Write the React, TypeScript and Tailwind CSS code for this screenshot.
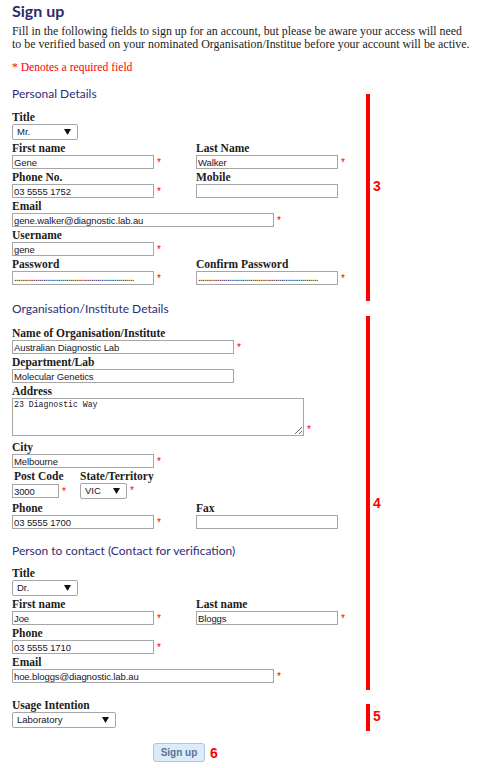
const serif = "font-['Liberation_Serif',serif]"
const sans = "font-['Liberation_Sans',Arial,sans-serif]"

function Req({ bottom }: { bottom?: boolean }) {
  return (
    <span
      className={`ml-[3px] text-[10px] leading-[10px] text-[#ff0000] ${sans} ${bottom ? 'self-end mb-[1px]' : 'self-start mt-[3px]'}`}
    >
      *
    </span>
  )
}

function Label({ children, className = '' }: { children: React.ReactNode; className?: string }) {
  return (
    <div className={`h-[14px] leading-[14px] text-[11.5px] font-bold text-[#1c1c1c] ${serif} ${className}`}>
      {children}
    </div>
  )
}

function TextBox({ value = '', width, req, dots }: { value?: string; width: string; req?: boolean; dots?: boolean }) {
  return (
    <div className="flex h-[14px]">
      <input
        readOnly
        value={dots ? '.'.repeat(62) : value}
        className={`h-[14px] border border-[#a6a6a6] bg-white px-[1px] leading-[12px] text-[#15152a] outline-none ${sans} ${dots ? 'text-[10px] tracking-[-0.85px] pb-[2px]' : 'text-[9.5px] tracking-[-0.1px]'} ${width}`}
      />
      {req && <Req />}
    </div>
  )
}

function Select({ value, width, req }: { value: string; width: string; req?: boolean }) {
  return (
    <div className="flex h-[16px]">
      <div
        className={`flex h-[16px] items-center justify-between rounded-[2px] border border-[#a6a6a6] bg-white pl-[4px] pr-[6px] text-[9.5px] text-[#15152a] ${sans} ${width}`}
      >
        <span>{value}</span>
        <svg width="7" height="6" viewBox="0 0 7 6">
          <path d="M0 0h7L3.5 6z" fill="#111" />
        </svg>
      </div>
      {req && <Req />}
    </div>
  )
}

function Field({ label, value, width = 'w-[142px]', req, dots }: { label: string; value?: string; width?: string; req?: boolean; dots?: boolean }) {
  return (
    <div className="mb-[1px]">
      <Label>{label}</Label>
      <TextBox value={value} width={width} req={req} dots={dots} />
    </div>
  )
}

function Pair({ left, right }: { left: React.ReactNode; right?: React.ReactNode }) {
  return (
    <div className="flex">
      <div className="w-[184px]">{left}</div>
      <div>{right}</div>
    </div>
  )
}

function Heading({ children, className = '' }: { children: React.ReactNode; className?: string }) {
  return (
    <div className={`h-[14px] leading-[14px] text-[12px] text-[#2d2d78] font-['Lato',sans-serif] ${className}`}>
      {children}
    </div>
  )
}

function Marker({ top, height, num, numTop }: { top: string; height: string; num: string; numTop: string }) {
  return (
    <>
      <div className={`absolute left-[366px] w-[4px] bg-[#ff0000] ${top} ${height}`} />
      <div className={`absolute left-[373px] text-[14px] font-bold leading-[16px] text-[#ff0000] ${sans} ${numTop}`}>{num}</div>
    </>
  )
}

export default function App() {
  return (
    <div className="relative min-h-[768px] w-[487px] bg-white pl-[12px]">
      <h1 className="h-[22px] text-[16px] font-bold leading-[22px] text-[#2b2b6b] font-['Lato',sans-serif]">Sign up</h1>
      <p className={`mt-[3px] text-[11.9px] leading-[13px] text-[#1c1c1c] ${serif}`}>
        Fill in the following fields to sign up for an account, but please be aware your access will need
        <br />
        to be verified based on your nominated Organisation/Institue before your account will be active.
      </p>
      <p className={`mt-[10px] text-[11.6px] leading-[13px] text-[#ff0000] ${serif}`}>* Denotes a required field</p>

      {/* Personal details */}
      <Heading className="mt-[13px]">Personal Details</Heading>
      <Label className="mt-[9px]">Title</Label>
      <Select value="Mr." width="w-[66px]" />
      <div className="mt-[1px]">
        <Pair left={<Field label="First name" value="Gene" req />} right={<Field label="Last Name" value="Walker" req />} />
        <Pair left={<Field label="Phone No." value="03 5555 1752" req />} right={<Field label="Mobile" />} />
        <Field label="Email" value="gene.walker@diagnostic.lab.au" width="w-[262px]" req />
        <Field label="Username" value="gene" req />
        <Pair left={<Field label="Password" dots req />} right={<Field label="Confirm Password" dots req />} />
      </div>

      {/* Organisation */}
      <Heading className="mt-[16px]">Organisation/Institute Details</Heading>
      <div className="mt-[10px]">
        <Field label="Name of Organisation/Institute" value="Australian Diagnostic Lab" width="w-[222px]" req />
        <Field label="Department/Lab" value="Molecular Genetics" width="w-[222px]" />
        <Label>Address</Label>
        <div className="flex">
          <textarea
            readOnly
            value="23 Diagnostic Way"
            className="block h-[38px] w-[292px] border border-[#a6a6a6] bg-white px-[1px] py-[1px] text-[8.2px] leading-[10px] text-[#15152a] outline-none font-['Liberation_Mono',monospace]"
          />
          <Req bottom />
        </div>
        <div className="mt-[4px]">
          <Field label="City" value="Melbourne" req />
        </div>
        <div className="flex">
          <div className="w-[68px]">
            <Label className="pl-[2px]">Post Code</Label>
            <div className="mt-[1px]">
              <TextBox value="3000" width="w-[47px]" req />
            </div>
          </div>
          <div>
            <Label>State/Territory</Label>
            <Select value="VIC" width="w-[47px]" req />
          </div>
        </div>
        <div className="mt-[2px]">
          <Pair left={<Field label="Phone" value="03 5555 1700" req />} right={<Field label="Fax" />} />
        </div>
      </div>

      {/* Contact */}
      <Heading className="mt-[14px]">Person to contact (Contact for verification)</Heading>
      <Label className="mt-[8px]">Title</Label>
      <Select value="Dr." width="w-[66px]" />
      <div className="mt-[1px]">
        <Pair left={<Field label="First name" value="Joe" req />} right={<Field label="Last name" value="Bloggs" req />} />
        <Field label="Phone" value="03 5555 1710" req />
        <Field label="Email" value="hoe.bloggs@diagnostic.lab.au" width="w-[262px]" req />
      </div>

      <Label className="mt-[15px]">Usage Intention</Label>
      <Select value="Laboratory" width="w-[104px]" />

      <div className="mt-[15px] flex items-center pl-[141px]">
        <button
          type="button"
          className={`h-[19px] w-[52px] rounded-[3px] border border-[#a9c8e6] bg-[#dcebfa] text-[10px] font-bold text-[#587490] ${sans}`}
        >
          Sign up
        </button>
        <span className={`ml-[5px] text-[14px] font-bold leading-[16px] text-[#ff0000] ${sans}`}>6</span>
      </div>

      {/* annotation markers */}
      <Marker top="top-[94px]" height="h-[207px]" num="3" numTop="top-[178px]" />
      <Marker top="top-[316px]" height="h-[374px]" num="4" numTop="top-[495px]" />
      <Marker top="top-[704px]" height="h-[27px]" num="5" numTop="top-[708px]" />
    </div>
  )
}
